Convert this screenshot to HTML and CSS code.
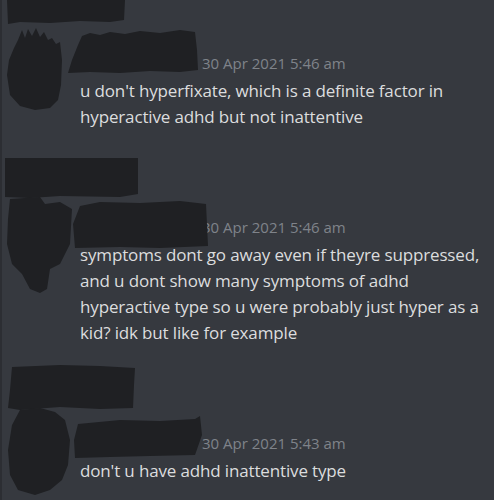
FILE: index.html
```html
<!DOCTYPE html>
<html lang="en">
<head>
    <meta charset="UTF-8">
    <meta name="viewport" content="width=device-width, initial-scale=1.0">
    <title>Messages</title>
    <link rel="stylesheet" href="styles.css">
</head>
<body>
    <div class="chat">
        <div class="message">
            <svg class="redact" width="220" height="140" viewBox="0 0 220 140">
                <path d="M7,0 L125,0 L124,20 L110,22 L80,21 L50,23 L20,22 L8,24 Z"/>
                <path d="M18,40 L22,30 L25,38 L28,29 L32,36 L36,28 L40,37 L44,32 L48,40 L52,38 L56,44 L60,42 L62,60 L61,85 L58,100 L50,108 L35,110 L20,106 L10,95 L7,75 L9,60 L14,48 Z"/>
                <path d="M82,36 L90,33 L100,35 L110,32 L125,34 L140,31 L160,33 L180,30 L195,32 L197,50 L198,70 L180,72 L150,71 L120,73 L90,72 L68,73 L72,60 L78,45 Z"/>
            </svg>
            <div class="content">
                <div class="header"><span class="name"></span><span class="time">30 Apr 2021 5:46 am</span></div>
                <p class="text">u don't hyperfixate, which is a definite factor in hyperactive adhd but not inattentive</p>
            </div>
        </div>

        <div class="message">
            <svg class="redact" width="220" height="140" viewBox="0 0 220 140">
                <path d="M5,-6 L138,-6 L138,30 L120,33 L60,32 L30,34 L5,33 Z"/>
                <path d="M10,35 L40,33 L45,40 L60,38 L72,45 L70,80 L60,100 L50,105 L47,125 L40,129 L30,125 L22,110 L12,100 L7,80 L8,55 Z"/>
                <path d="M80,42 L100,38 L140,39 L180,37 L206,40 L208,82 L160,84 L120,83 L75,84 L73,60 Z"/>
            </svg>
            <div class="content">
                <div class="header"><span class="name"></span><span class="time">30 Apr 2021 5:46 am</span></div>
                <p class="text">symptoms dont go away even if theyre suppressed, and u dont show many symptoms of adhd hyperactive type so u were probably just hyper as a kid? idk but like for example</p>
            </div>
        </div>

        <div class="message">
            <svg class="redact" width="220" height="140" viewBox="0 0 220 140">
                <path d="M12,-13 L60,-15 L100,-14 L135,-12 L134,5 L133,28 L100,29 L60,27 L20,30 L8,28 L10,10 Z"/>
                <path d="M20,30 L40,28 L55,32 L65,40 L70,60 L68,85 L62,100 L50,110 L35,115 L18,110 L10,95 L8,70 L12,45 Z"/>
                <path d="M78,44 L120,40 L160,41 L195,39 L200,36 L202,55 L195,75 L150,76 L110,77 L75,78 L74,60 Z"/>
            </svg>
            <div class="content">
                <div class="header"><span class="name"></span><span class="time">30 Apr 2021 5:43 am</span></div>
                <p class="text">don't u have adhd inattentive type</p>
            </div>
        </div>
    </div>
</body>
</html>
```

FILE: styles.css
```css
body {
    margin: 0;
    background: #36393f;
    font-family: "Open Sans", "Noto Sans", sans-serif;
    overflow: hidden;
}
.chat {
    border-left: 2px solid #2c2e33;
    min-height: 500px;
}
.message {
    position: relative;
    padding: 48px 0 34px 78px;
}
.redact {
    position: absolute;
    left: -2px;
    top: 0;
    overflow: visible;
    fill: #1f2023;
}
.header {
    height: 30px;
    line-height: 30px;
    display: flex;
}
.name {
    width: 122px;
}
.time {
    color: #7f838a;
    font-size: 15px;
}
.text {
    margin: 0;
    color: #dcddde;
    font-size: 17px;
    line-height: 26px;
    letter-spacing: -0.15px;
}
```
